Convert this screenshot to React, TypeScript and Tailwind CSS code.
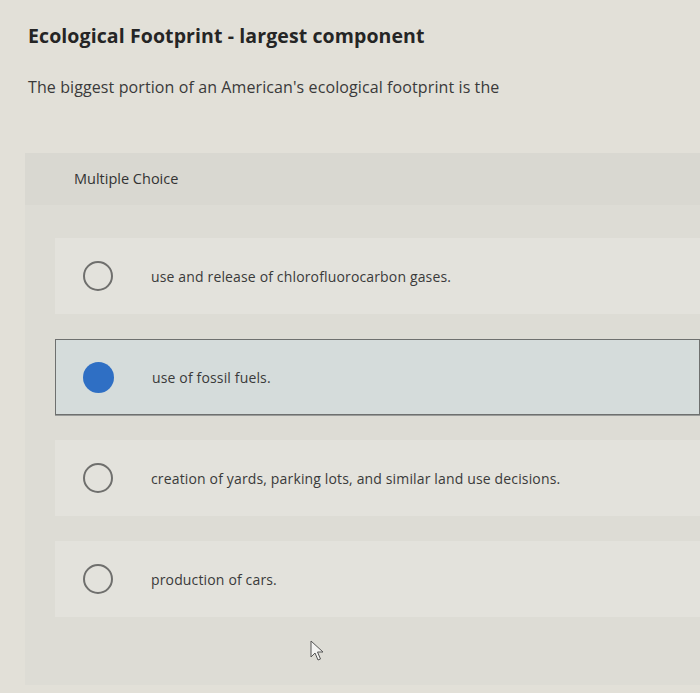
import React from 'react'

const options = [
  { text: 'use and release of chlorofluorocarbon gases.', selected: false },
  { text: 'use of fossil fuels.', selected: true },
  { text: 'creation of yards, parking lots, and similar land use decisions.', selected: false },
  { text: 'production of cars.', selected: false },
]

function Radio({ selected }: { selected: boolean }) {
  if (selected) {
    return <div className="w-[31px] h-[31px] rounded-full bg-[#2f6fc4] shrink-0" />
  }
  return <div className="w-[30px] h-[30px] rounded-full border-[2px] border-[#6f6f6d] shrink-0" />
}

export default function App() {
  return (
    <div
      className="relative w-[700px] h-[693px] overflow-hidden bg-[#e2e0d8] text-[#2f2f2f]"
      style={{ fontFamily: '"Open Sans", Lato, sans-serif' }}
    >
      <div className="pl-[28px] pt-[22px]">
        <h1 className="text-[19.5px] font-bold text-[#252525] leading-[28px] tracking-[0.1px]">
          Ecological Footprint - largest component
        </h1>
        <p className="mt-[25px] text-[16px] text-[#3a3a3a] leading-[24px] tracking-[0.1px]">
          The biggest portion of an American's ecological footprint is the
        </p>
      </div>

      <div className="ml-[25px] mt-[54px] h-[532px] bg-[#dddcd5]">
        <div className="h-[52px] pl-[49px] flex items-center bg-[#d9d8d1] text-[14.5px] text-[#333]">
          Multiple Choice
        </div>

        <div className="pl-[30px] pt-[33px] flex flex-col gap-[25px]">
          {options.map((o) => (
            <div
              key={o.text}
              className={
                o.selected
                  ? 'h-[76px] flex items-center pl-[27px] bg-[#d5dcdb] border border-[#6e706f] shadow-[0_1px_0_#9a9c9a]'
                  : 'h-[76px] flex items-center pl-[28px] bg-[#e3e2dc]'
              }
            >
              <Radio selected={o.selected} />
              <span className="ml-[38px] text-[14px] text-[#3a3a3a] tracking-[0.15px]">{o.text}</span>
            </div>
          ))}
        </div>
      </div>

      <svg
        className="absolute left-[310px] top-[640px]"
        width="16"
        height="22"
        viewBox="0 0 16 22"
      >
        <path
          d="M1 1 L1 17 L5 13 L8 20 L10.5 19 L7.5 12 L13 12 Z"
          fill="#f4f4f2"
          stroke="#555"
          strokeWidth="1"
          strokeLinejoin="round"
        />
      </svg>
    </div>
  )
}
